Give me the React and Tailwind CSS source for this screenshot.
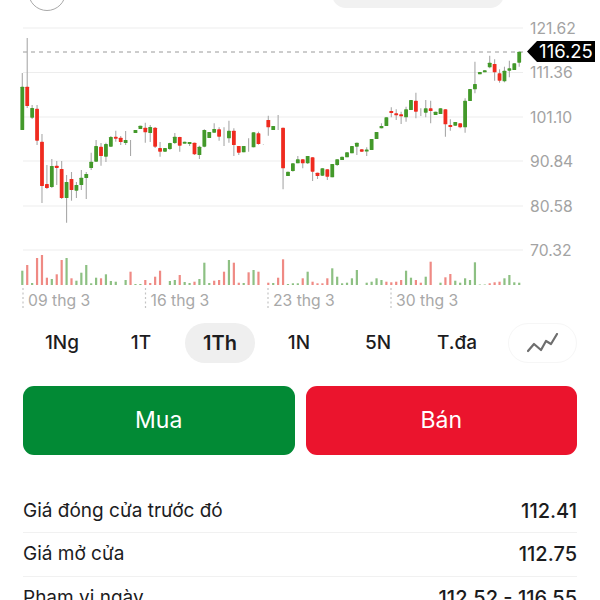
import { Fragment } from "react";

// g = green, r = red, d = doji (wick only): [kind, wickTop, bodyTop, bodyBottom, wickBottom]
const candles = [
  ["g",73,86.7,130,130],["r",38,86.7,106,108],["g",105,108,117.7,119],["r",105,108.7,140.7,145],
  ["r",134,141.7,186,203],["r",165,184,188,189],["g",159,166,187,188],["r",161,165.7,168,185],
  ["r",161,169,198,199],["g",175,182,198,222.7],["r",172,179,190,200.7],["g",182,185,190.7,198],
  ["g",170,177.7,185,190],["g",172,174,178,199],["g",152.7,161.7,168,170],["g",140,146,161.7,162],
  ["r",143,146.7,156,165.7],["g",142.7,144,156.7,162],["g",136,137,146.7,147],["r",130.7,136.7,137.7,141.7],
  ["r",136,137.7,142,145],["g",131,140,143,145],["d",140,0,0,156],["g",130,130,133,133],
  ["g",125.7,125.7,129,129],["r",122.7,127.7,132.3,142.7],["g",125,127,133,142],["r",127,127.7,146.7,148],
  ["r",142,148,151.7,156.7],["g",148,148,151.7,152],["g",142.7,143,149,150],["g",133,136.7,143,144],
  ["r",136.7,137,145.7,151.7],["g",141.7,141.7,143.3,143.3],["g",142,142,143,146],["r",142.7,142.7,154.3,155],
  ["g",145.7,146.7,155,159],["g",129.3,130,146.7,147.3],["g",132,132,138,138],["g",123.3,129,132.7,132.7],
  ["r",127.3,129.3,136.7,140.7],["d",127.3,0,0,146],["g",120.7,130.7,138.3,142.7],["r",128.3,130.7,145,156],
  ["r",146,146,152.7,155],["g",146,146,152.3,152.3],["d",138.3,0,0,151.7],["g",132.3,132.3,147.3,147.3],
  ["r",131.7,133.3,144,144.7],["d",144,0,0,144.6],["r",115.7,120,127.3,135.7],["g",126,126,130,130],
  ["d",115,0,0,130],["r",127.7,127.7,168.3,189.3],["g",171.7,171.7,176,176],["g",163.3,163.3,171,171.7],
  ["g",156,159.3,163.3,163.3],["r",159.3,159.3,163.3,168.3],["g",156,156,163.3,164],["r",157.3,157.3,171.7,181],
  ["r",172.7,172.7,176,179],["g",168.3,168.3,175.7,176],["r",169.3,169.3,176.7,180],["g",164,164,177.3,177.3],
  ["g",159.3,159.3,165,166],["g",156.7,156.7,160,160],["g",152.3,152.3,157.3,157.3],["g",146,146,153.3,153.3],
  ["g",142.7,142.7,146.7,155],["r",149,149.3,151.7,152],["g",147.3,149.5,151,156],["g",139,139,150,150],
  ["g",132,132,139,139],["g",123.3,126,128.3,128.3],["g",117.3,117.3,126,126],["r",107.3,111,112.7,117.3],
  ["r",109.3,113.3,115,120],["r",111.7,114.3,116,124],["g",106.7,109.3,117.3,121.7],["g",100,100,110,110],
  ["r",92.7,100.7,111.7,118.3],["d",108.3,0,0,116],["g",100,108.3,112.7,117.3],["r",100.7,108.3,111,123.3],
  ["g",111.7,111.7,115,115],["g",108.3,108.3,114,114],["r",109.3,109.3,124.3,136.7],["r",119.3,125,126.7,130.7],
  ["g",122,122,125.7,125.7],["r",123.3,123.3,127.3,128.3],["g",98.3,100.7,127.3,132.7],["g",89,89,101,101],
  ["g",61.7,84,89.3,93.3],["g",72,72,74.3,74.3],["g",70.3,70.3,72.3,72.3],["g",55.7,62.7,67.3,68.3],
  ["r",59.3,64,72.3,80.7],["r",69.3,73.3,80.7,82.7],["g",66.7,70.7,81.3,82.3],["g",60.7,68.3,70.7,77.3],
  ["g",63.3,63.3,70,70],["g",51.7,51.7,62.7,66.7],
];

// volume per candle, negative = red bar
const volumes = [
  14.3,-20,2,-27,-30,-7.3,6,-10.7,-25,27,-6.7,4.3,12.3,20,1.7,7.3,-6.7,10.7,4,3.3,0,5,-13.3,1,1,
  -5,-2,-8.3,-14.3,0,4,5,-10,3,2,-3.3,6,22.3,2,-4.3,-5,-13.3,25,-22.3,-2.3,2,-12.7,15,-13.3,0,
  -2.3,2,-7.3,-25.7,1,1.7,1.7,-6.7,13.3,-3.3,-1.7,-1.7,-6.7,16.7,8.3,1.7,2.3,6.7,15,0,2.3,3.3,
  6.7,5,-3.3,-2.7,-3.3,-5,14.3,7.3,-5,-2.3,8.3,-23.3,0,2.3,-7.7,-11,4.3,2.3,6.7,5,22.7,0.5,0.5,
  -1.7,-2.7,-3.3,6.7,10,2.7,2.3,
];

const gridLines = [
  { y: 28, label: "121.62" },
  { y: 72.5, label: "111.36" },
  { y: 117, label: "101.10" },
  { y: 161, label: "90.84" },
  { y: 206, label: "80.58" },
  { y: 250, label: "70.32" },
];

const dates = [
  { x: 23, label: "09 thg 3" },
  { x: 145.5, label: "16 thg 3" },
  { x: 268, label: "23 thg 3" },
  { x: 391, label: "30 thg 3" },
];

const ranges = ["1Ng", "1T", "1Th", "1N", "5N", "T.đa"];

const stats = [
  { label: "Giá đóng cửa trước đó", value: "112.41" },
  { label: "Giá mở cửa", value: "112.75" },
  { label: "Phạm vi ngày", value: "112.52 - 116.55" },
];

const candleX = (i) => 22.3 + i * 4.92;

const Chart = () => (
  <div className="relative h-[309px] w-full">
    <svg width="600" height="309" viewBox="0 11 600 309" className="block">
      {gridLines.map((g) => (
        <Fragment key={g.label}>
          <line x1="23" x2="523" y1={g.y} y2={g.y} stroke="#ededed" strokeWidth="1.2" />
          <text x="530" y={g.y + 5.5} fontSize="15.7" fill="#a3a3a3">{g.label}</text>
        </Fragment>
      ))}
      <line x1="23" x2="526" y1="52" y2="52" stroke="#9a9a9a" strokeWidth="1" strokeDasharray="4 4" />

      {candles.map(([kind, wt, bt, bb, wb], i) => {
        const x = candleX(i);
        return (
          <Fragment key={i}>
            <line x1={x} x2={x} y1={wt} y2={wb} stroke="#a9a9a9" strokeWidth="1.1" />
            {kind !== "d" && (
              <rect
                x={x - 1.9}
                y={bt}
                width="3.8"
                height={Math.max(bb - bt, 2)}
                rx="0.6"
                fill={kind === "g" ? "#43992a" : "#ef2b1f"}
              />
            )}
          </Fragment>
        );
      })}

      {volumes.map((v, i) => (
        <rect
          key={i}
          x={candleX(i) - 1.1}
          y={285 - Math.abs(v)}
          width="2.2"
          height={Math.abs(v)}
          fill={v < 0 ? "#ef8a84" : "#8dc083"}
        />
      ))}

      {dates.map((d) => (
        <Fragment key={d.label}>
          <line x1={d.x} x2={d.x} y1="288" y2="309" stroke="#c4c4c4" strokeWidth="1.2" strokeDasharray="2 2.5" />
          <text x={d.x + 5} y="305.5" fontSize="15.7" fill="#a8a8a8">{d.label}</text>
        </Fragment>
      ))}
    </svg>

    {/* current price tag */}
    <div className="absolute left-[527px] top-[30px] flex h-[21px] items-center">
      <svg width="10" height="21" viewBox="0 0 10 21" className="block">
        <polygon points="0,10.5 10,0 10,21" fill="#000" />
      </svg>
      <div className="flex h-[21px] w-[58px] items-center justify-center bg-black text-[18.5px] text-white">116.25</div>
    </div>
  </div>
);

const App = () => {
  return (
    <div className="h-[600px] w-[600px] overflow-hidden bg-white font-['Inter','Noto_Sans',sans-serif] text-[#1c1c1e]">
      {/* cut off header */}
      <div className="flex h-[11px] items-end overflow-hidden">
        <div className="ml-[28px] size-[38px] shrink-0 rounded-full border border-[#a8a8a8]" />
        <div className="mb-[3px] ml-[266px] h-[30px] w-[172px] shrink-0 rounded-[14px] bg-[#f1f1f1]" />
      </div>

      <Chart />

      <div className="mt-[3px] flex h-[40px] pl-[27px]">
        <div className="flex gap-[9px]">
          {ranges.map((r) => (
            <div
              key={r}
              className={
                r === "1Th"
                  ? "flex h-[40px] w-[70px] items-center justify-center rounded-[20px] bg-[#efefef] text-[20px] font-semibold"
                  : "flex h-[40px] w-[70px] items-center justify-center text-[19px] font-medium"
              }
            >
              {r}
            </div>
          ))}
        </div>
        <div className="ml-[16px] flex h-[40px] w-[69px] items-center justify-center rounded-[20px] border border-[#f6f6f6]">
          <svg width="32" height="20" viewBox="0 0 32 20">
            <polyline points="1,18 7,11 14,17 19,8 24,11 30,1" fill="none" stroke="#6e6e6e" strokeWidth="2.2" strokeLinejoin="round" strokeLinecap="round" />
          </svg>
        </div>
      </div>

      <div className="mx-[23px] mt-[23px] flex gap-[11px]">
        <div className="flex h-[69px] flex-1 items-center justify-center rounded-[11px] bg-[#028a35] text-[23px] text-white">Mua</div>
        <div className="flex h-[69px] flex-1 items-center justify-center rounded-[11px] bg-[#eb142d] text-[23px] text-white">Bán</div>
      </div>

      <div className="mx-[23px] mt-[34.5px]">
        {stats.map((s) => (
          <div key={s.label} className="flex h-[43.5px] items-center justify-between border-b border-[#f1f1f1] text-[19px]">
            <span>{s.label}</span>
            <span className="text-[20px] font-medium">{s.value}</span>
          </div>
        ))}
      </div>
    </div>
  );
};

export default App;
